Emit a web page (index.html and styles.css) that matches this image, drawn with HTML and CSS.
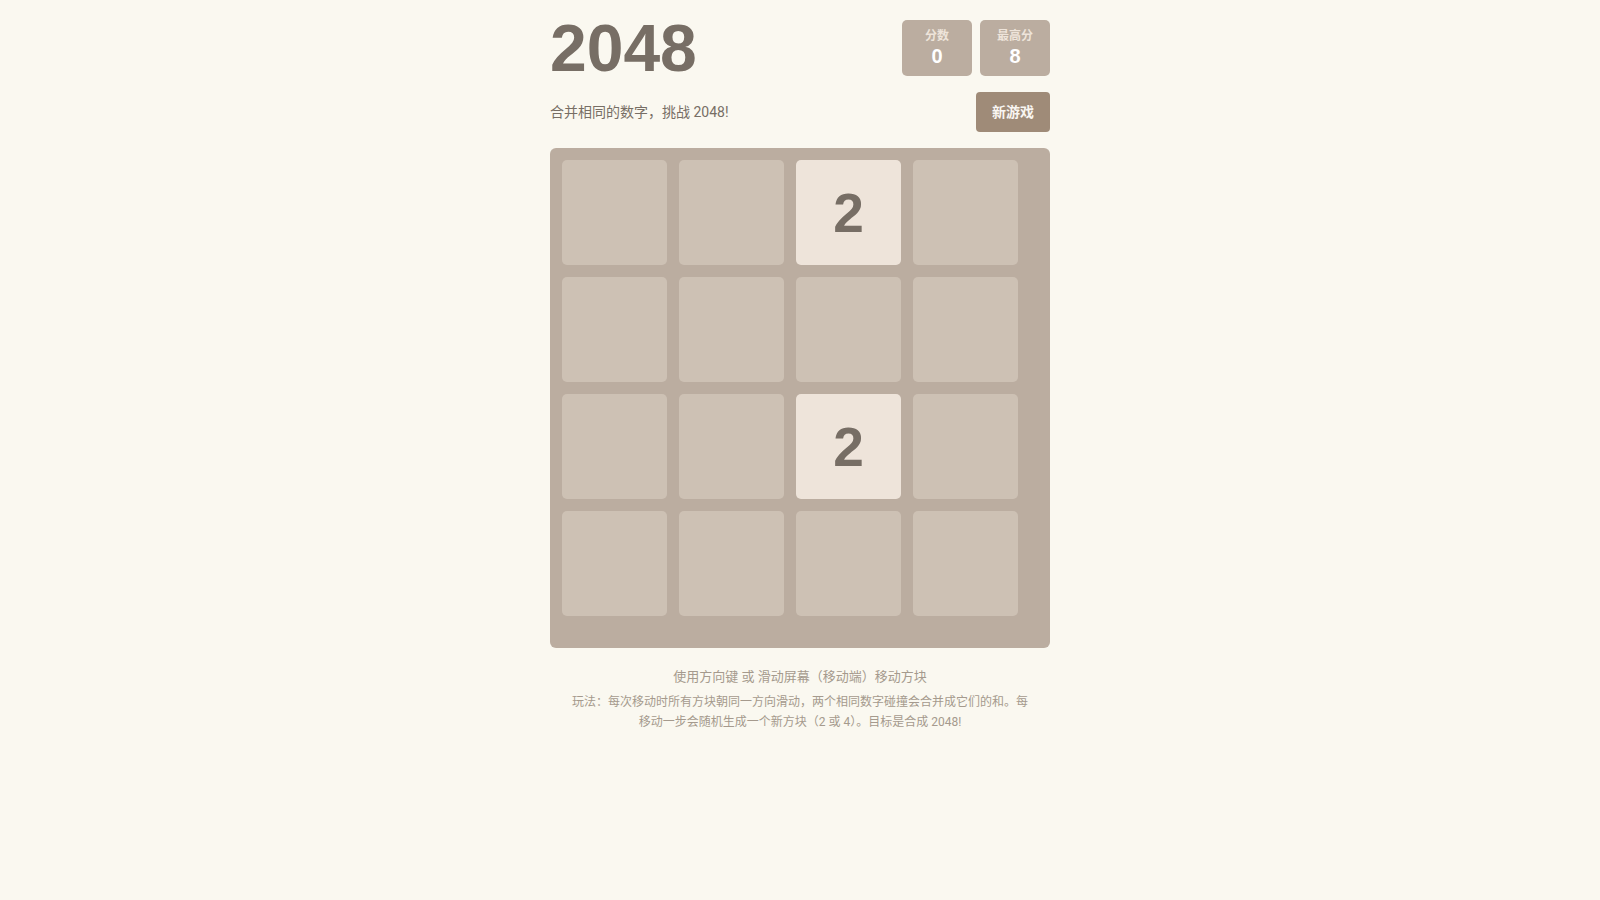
FILE: index.html
```html
<!DOCTYPE html>
<html lang="zh-CN">
<head>
<meta charset="utf-8">
<title>2048</title>
<link rel="stylesheet" href="styles.css">
</head>
<body>
<div class="container">
  <div class="header">
    <h1 class="title">2048</h1>
    <div class="scores">
      <div class="score-box"><div class="score-label">分数</div><div class="score-value">0</div></div>
      <div class="score-box"><div class="score-label">最高分</div><div class="score-value">8</div></div>
    </div>
  </div>
  <div class="sub-row">
    <p class="intro">合并相同的数字，挑战 2048!</p>
    <button class="new-game">新游戏</button>
  </div>
  <div class="board">
    <div class="cell"></div><div class="cell"></div><div class="cell tile-2">2</div><div class="cell"></div>
    <div class="cell"></div><div class="cell"></div><div class="cell"></div><div class="cell"></div>
    <div class="cell"></div><div class="cell"></div><div class="cell tile-2">2</div><div class="cell"></div>
    <div class="cell"></div><div class="cell"></div><div class="cell"></div><div class="cell"></div>
  </div>
  <div class="footer">
    <p class="hint">使用方向键 或 滑动屏幕（移动端）移动方块</p>
    <p class="rules">玩法：每次移动时所有方块朝同一方向滑动，两个相同数字碰撞会合并成它们的和。每移动一步会随机生成一个新方块（2 或 4）。目标是合成 2048!</p>
  </div>
</div>
</body>
</html>
```
FILE: styles.css
```css
* { box-sizing: border-box; }
html, body {
  margin: 0;
  padding: 0;
  background: #faf8f0;
}
body {
  font-family: Roboto, "Noto Sans CJK SC", sans-serif;
  color: #776e65;
}
.container {
  width: 500px;
  margin: 0 auto;
  padding-top: 15px;
}
.header {
  display: flex;
  justify-content: space-between;
  align-items: center;
}
.title {
  margin: 0;
  font-family: "Liberation Sans", Arial, sans-serif;
  font-size: 66px;
  line-height: 1;
  font-weight: bold;
  color: #776e65;
}
.scores {
  display: flex;
  gap: 8px;
}
.score-box {
  width: 70px;
  height: 56px;
  background: #bbada0;
  border-radius: 5px;
  padding-top: 8px;
  text-align: center;
}
.score-label {
  font-size: 12px;
  line-height: 16px;
  font-weight: bold;
  color: #eee4da;
}
.score-value {
  font-family: "Liberation Sans", Arial, sans-serif;
  font-size: 20px;
  line-height: 24px;
  font-weight: bold;
  color: #ffffff;
}
.sub-row {
  display: flex;
  justify-content: space-between;
  align-items: center;
  margin-top: 11px;
}
.intro {
  margin: 0;
  font-size: 14px;
  line-height: 20px;
  color: #776e65;
}
.new-game {
  font-family: inherit;
  font-size: 14px;
  font-weight: bold;
  line-height: 20px;
  height: 40px;
  padding: 10px 16px;
  border: none;
  border-radius: 4px;
  background: #9f8b78;
  color: #f9f6f2;
}
.board {
  margin-top: 16px;
  width: 500px;
  height: 500px;
  background: #bbada0;
  border-radius: 6px;
  padding: 12px;
  display: grid;
  grid-template-columns: repeat(4, 105px);
  grid-template-rows: repeat(4, 105px);
  gap: 12px;
}
.cell {
  background: #cdc1b4;
  border-radius: 5px;
  display: flex;
  align-items: center;
  justify-content: center;
  font-family: "Liberation Sans", Arial, sans-serif;
  font-size: 55px;
  font-weight: bold;
  color: #776e65;
}
.tile-2 {
  background: #eee4da;
}
.footer {
  text-align: center;
  color: #a59a8d;
  padding: 0 19px;
  margin-top: 19px;
}
.hint {
  margin: 0;
  font-size: 13px;
  line-height: 19px;
}
.rules {
  margin: 6px 0 0;
  font-size: 12px;
  line-height: 20px;
}
```
